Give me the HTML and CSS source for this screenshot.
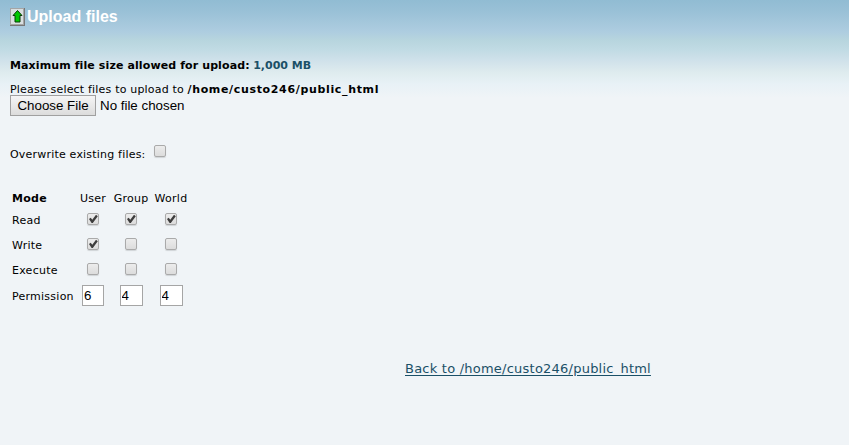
FILE: index.html
```html
<!DOCTYPE html>
<html lang="en">
<head>
<meta charset="utf-8">
<title>Upload files</title>
<link rel="stylesheet" href="styles.css">
</head>
<body>
<header class="heading">
<svg class="upload-icon" width="15" height="18" viewBox="0 0 15 18"><path d="M0 0h15v18H0z" fill="#777"/><path d="M0 0h14v17H0z" fill="#a5a5a5"/><path d="M1 1h12v15H1z" fill="#d9dfe0"/><path d="M7.5 2.5L12 7.5H10V14H5V7.5H3z" fill="#00c800" stroke="#073c07"/></svg>
<h1>Upload files</h1>
</header>
<form>
<p class="limit"><b class="label">Maximum file size allowed for upload:</b> <b class="size">1,000 MB</b></p>
<p class="select"><span class="prompt">Please select files to upload to</span> <b class="path">/home/custo246/public_html</b></p>
<div class="file"><button type="button">Choose File</button><span>No file chosen</span></div>
<label class="overwrite"><span>Overwrite existing files:</span><input type="checkbox"></label>
<div class="modes">
<b class="name">Mode</b><span>User</span><span>Group</span><span>World</span>
<span class="name right-name">Read</span><input type="checkbox" checked><input type="checkbox" checked><input type="checkbox" checked>
<span class="name right-name">Write</span><input type="checkbox" checked><input type="checkbox"><input type="checkbox">
<span class="name right-name">Execute</span><input type="checkbox"><input type="checkbox"><input type="checkbox">
<span class="name">Permission</span><input class="digit first" type="text" value="6"><input class="digit" type="text" value="4"><input class="digit" type="text" value="4">
</div>
</form>
<footer><a href="#">Back to /home/custo246/public_html</a></footer>
</body>
</html>
```
FILE: styles.css
```css
* { box-sizing: border-box; }
body {
  margin: 0;
  height: 445px;
  padding: 8px 10px 0;
  overflow: hidden;
  background: #f0f4f7 linear-gradient(#91bcd3 0, #9ac1d7 12px, #aecde0 32px, #b7d5de 40px, #c1dbe4 50px, #cfe1ea 60px, #deebee 72px, #e8f1f6 84px, #f0f4f7 98px) no-repeat;
  color: #000;
  font: 11px/14px "DejaVu Sans", sans-serif;
}
h1, p { margin: 0; }
.heading { display: flex; gap: 2px; height: 50px; }
.upload-icon { display: block; }
h1 { color: #fff; font: bold 16px/17px "Liberation Sans", sans-serif; }
.limit { height: 24px; line-height: 16px; white-space: nowrap; }
.select { height: 13px; line-height: 16px; white-space: nowrap; }
.label { letter-spacing: .11px; }
.prompt { letter-spacing: .19px; }
.path { letter-spacing: .66px; }
.size { color: #1b5067; }
.file { display: flex; gap: 4px; height: 21px; font: 13.33px/22px "Liberation Sans", sans-serif; }
.file button {
  width: 86px;
  height: 21px;
  padding: 0;
  border: 1px solid #a0a0a0;
  background: linear-gradient(#f5f5f5, #dcdcdc);
  color: #000;
  font: 13.33px/18px "Liberation Sans", sans-serif;
}
.overwrite { display: flex; gap: 8px; height: 73px; padding-top: 29px; }
.overwrite span { width: 136px; padding-top: 3px; letter-spacing: .2px; white-space: nowrap; }
input[type="checkbox"] {
  appearance: none;
  width: 12px;
  height: 12px;
  margin: 0;
  border: 1px solid #aaa;
  border-radius: 2px;
  background: linear-gradient(#ececec, #dcdcdc);
  box-shadow: 0 1px 1px #0002;
}
input[type="checkbox"]:checked::before {
  content: "";
  display: block;
  width: 10px;
  height: 10px;
  background: #3d3d3d;
  clip-path: polygon(10% 50%, 27% 37%, 43% 57%, 80% 8%, 98% 22%, 48% 91%, 36% 91%);
}
.modes {
  display: grid;
  grid-template-columns: 64px 34px 42px 38px;
  grid-template-rows: 18px 24px 26px 24px 29px;
  align-items: center;
  justify-items: center;
  width: 180px;
  margin-left: 2px;
  letter-spacing: .25px;
}
.modes > span, .modes > b { padding-top: 2px; }
.modes > .right-name { padding-top: 4px; }
.name { justify-self: start; }
.digit {
  width: 23px;
  height: 21px;
  margin: 0;
  padding: 0 0 0 1px;
  border: 1px solid #a5a5a5;
  border-radius: 0;
  background: #fff;
  font: 13.33px "Liberation Sans", sans-serif;
}
.first { width: 22px; }
footer { padding: 50px 0 0 395px; font-size: 13px; line-height: 17px; letter-spacing: .23px; white-space: nowrap; }
footer a { color: #1b5067; text-decoration-thickness: 1px; text-underline-offset: 2px; }
```
